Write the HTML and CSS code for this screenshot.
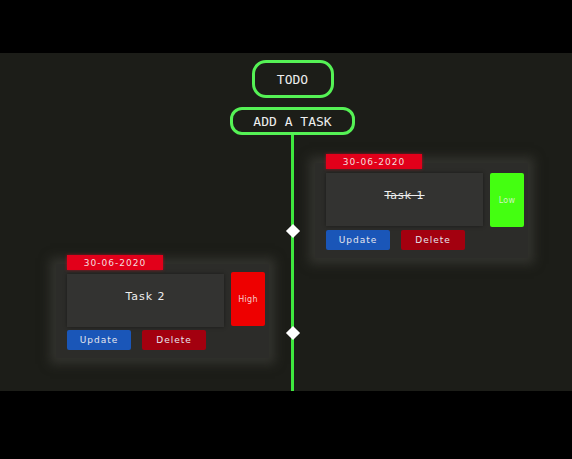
FILE: index.html
```html
<!DOCTYPE html>
<html>
<head>
<meta charset="utf-8">
<link rel="stylesheet" href="styles.css">
</head>
<body>
<main class="app">
  <header class="head">
    <button class="pill pill-todo">TODO</button>
    <button class="pill pill-add">ADD A TASK</button>
  </header>
  <section class="timeline">
    <div class="line"></div>
    <div class="card card-right">
      <div class="date">30-06-2020</div>
      <div class="row">
        <div class="text done">Task 1</div>
        <div class="prio low">Low</div>
      </div>
      <div class="actions">
        <button class="btn update">Update</button>
        <button class="btn delete">Delete</button>
      </div>
    </div>
    <div class="dot dot-1"></div>
    <div class="card card-left">
      <div class="date">30-06-2020</div>
      <div class="row">
        <div class="text">Task 2</div>
        <div class="prio high">High</div>
      </div>
      <div class="actions">
        <button class="btn update">Update</button>
        <button class="btn delete">Delete</button>
      </div>
    </div>
    <div class="dot dot-2"></div>
  </section>
</main>
</body>
</html>
```

FILE: styles.css
```css
html, body {
  margin: 0;
  padding: 0;
  background: #000;
}
body {
  width: 572px;
  height: 459px;
  overflow: hidden;
}
.app {
  margin-top: 53px;
  height: 338px;
  background: #1c1d18;
  display: flex;
  flex-direction: column;
  overflow: hidden;
}
.head {
  display: flex;
  flex-direction: column;
  align-items: center;
  padding: 7px 0 0 13px;
  gap: 9px;
}
.pill {
  background: #1c1d18;
  border: 3px solid #55f255;
  color: #eeeeee;
  font-family: "DejaVu Sans Mono", monospace;
  font-size: 13px;
  padding: 0;
  box-sizing: border-box;
  display: flex;
  align-items: center;
  justify-content: center;
}
.pill-todo {
  width: 82px;
  height: 38px;
  border-radius: 14px;
}
.pill-add {
  width: 125px;
  height: 28px;
  border-radius: 12px;
}
.timeline {
  flex: 1;
  display: grid;
  grid-template-columns: 291px 3px 1fr;
  grid-template-rows: auto auto 1fr;
  padding-top: 19px;
}
.line {
  grid-column: 2;
  grid-row: 1 / 4;
  background: #3ee83e;
  margin-top: -19px;
}
.dot {
  grid-column: 2;
  width: 10px;
  height: 10px;
  background: #ffffff;
  transform: rotate(45deg);
  justify-self: center;
  align-self: start;
  z-index: 1;
}
.dot-1 { grid-row: 1; margin-top: 72px; }
.dot-2 { grid-row: 2; margin-top: 70px; }
.card {
  display: flex;
  flex-direction: column;
  align-items: flex-start;
  background: #2c2c29;
  box-shadow: 0 0 10px 6px rgba(70, 70, 64, 0.55);
  padding: 0 4px 8px 11px;
  width: 198px;
  font-family: "DejaVu Sans", sans-serif;
  color: #eeeeee;
  letter-spacing: 1px;
}
.card-right {
  grid-column: 3;
  grid-row: 1;
  margin: 9px 0 0 21px;
  align-self: start;
}
.card-left {
  grid-column: 1;
  grid-row: 2;
  margin: 6px 0 0 56px;
  align-self: start;
}
.date {
  margin-top: -9px;
  width: 96px;
  height: 15px;
  background: #e2001a;
  box-shadow: 0 0 3px rgba(226, 0, 26, 0.6);
  font-size: 9px;
  display: flex;
  align-items: center;
  justify-content: center;
  color: #f4dede;
}
.row {
  display: flex;
  gap: 7px;
  margin-top: 4px;
  width: 198px;
}
.text {
  width: 157px;
  height: 53px;
  box-sizing: border-box;
  padding-bottom: 8px;
  background: #333331;
  box-shadow: 0 0 4px rgba(0, 0, 0, 0.4);
  display: flex;
  align-items: center;
  justify-content: center;
  font-size: 11px;
}
.done {
  text-decoration: line-through;
}
.prio {
  width: 34px;
  height: 54px;
  display: flex;
  align-items: center;
  justify-content: center;
  font-size: 8px;
  letter-spacing: 0.3px;
  border-radius: 2px;
}
.low {
  background: #44ff11;
  color: #d0f2c0;
}
.high {
  background: #ee0000;
  color: #f4caca;
  margin-top: -2px;
}
.actions {
  display: flex;
  gap: 11px;
  margin-top: 3px;
}
.btn {
  width: 64px;
  height: 20px;
  border: none;
  border-radius: 2px;
  padding: 0;
  font-family: "DejaVu Sans", sans-serif;
  font-size: 9px;
  letter-spacing: 1px;
  color: #e6e6ee;
}
.update { background: #1a56b8; }
.delete { background: #a3000f; }
```
